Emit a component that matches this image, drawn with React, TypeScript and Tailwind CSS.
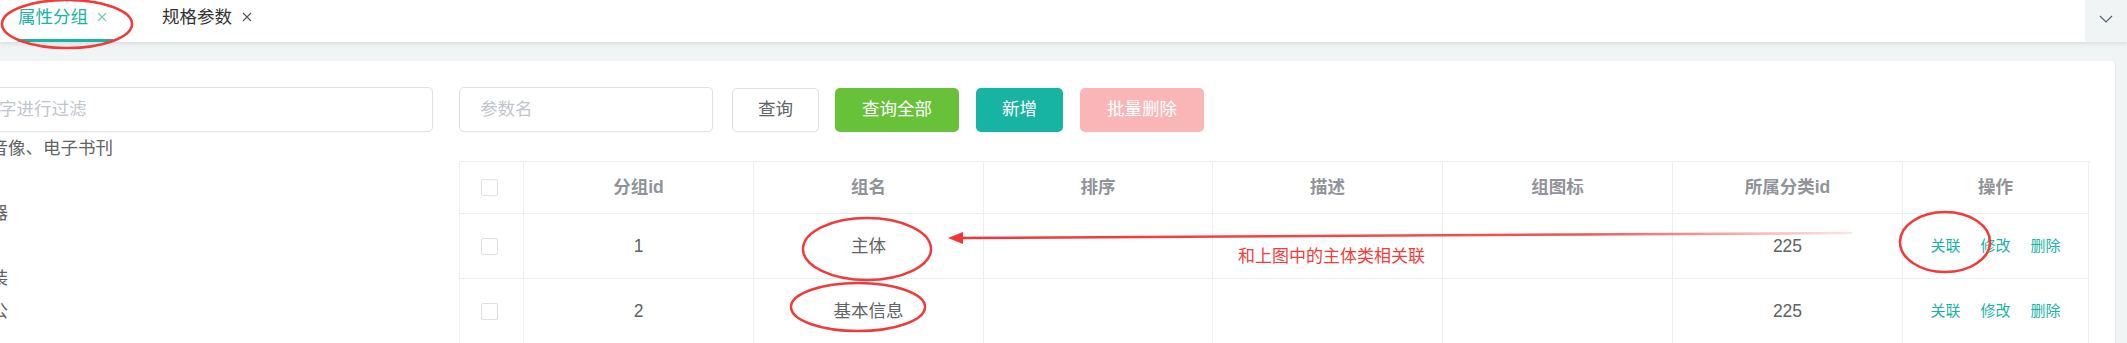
const cols = "grid grid-cols-[64px_230px_230px_229px_230px_230px_230px_186px]";
const cell = "border-r border-b border-[#ebeef5] flex items-center justify-center";

const headers = ["分组id", "组名", "排序", "描述", "组图标", "所属分类id", "操作"];
const rows = [
  { id: "1", name: "主体", sort: "", desc: "", icon: "", catId: "225" },
  { id: "2", name: "基本信息", sort: "", desc: "", icon: "", catId: "225" },
];
const tree = ["图书、音像、电子书刊", "手机", "家用电器", "数码", "家居家装", "电脑办公"];

const Close = ({ color }: { color: string }) => (
  <svg width="10" height="10" viewBox="0 0 10 10">
    <path d="M1 1L9 9M9 1L1 9" stroke={color} strokeWidth="1.1" />
  </svg>
);

const Checkbox = () => (
  <span className="block w-[17px] h-[17px] rounded-[2px] border border-[#dcdfe6] bg-white" />
);

const Annotations = () => (
  <svg className="absolute left-0 top-0 z-20 pointer-events-none" width="2127" height="343">
    <defs>
      <linearGradient id="fade" gradientUnits="userSpaceOnUse" x1="958" y1="0" x2="1852" y2="0">
        <stop offset="0" stopColor="#f23535" stopOpacity="1" />
        <stop offset="0.7" stopColor="#f23535" stopOpacity="0.85" />
        <stop offset="1" stopColor="#f23535" stopOpacity="0.12" />
      </linearGradient>
    </defs>
    <g fill="none" stroke="#f23a3a" strokeWidth="2.5">
      <ellipse cx="67" cy="24" rx="65" ry="24" />
      <ellipse cx="867" cy="249" rx="64" ry="31" />
      <ellipse cx="858" cy="307" rx="67" ry="24" />
      <ellipse cx="1945" cy="242" rx="45" ry="30" />
    </g>
    <path d="M958 238L1852 233" stroke="url(#fade)" strokeWidth="2.5" />
    <polygon points="948,238 963,232 963,244" fill="#f23535" />
  </svg>
);

export default function App() {
  return (
    <div className="relative w-[2127px] h-[343px] overflow-hidden bg-[#f1f4f5] font-['Liberation_Sans','Noto_Sans_CJK_SC',sans-serif] text-[17.5px]">
      {/* tabs bar */}
      <div className="relative z-10 h-[42px] bg-white flex shadow-[0_2px_4px_rgba(0,0,0,0.09)]">
        <div className="flex-1 flex pl-[18px] gap-[49px]">
          <div className="flex flex-col w-[95px]">
            <div className="h-[34px] flex items-center gap-[9px] text-[#17b3a3]">
              <span>属性分组</span>
              <Close color="#6fc9c0" />
            </div>
            <div className="mt-[5px] h-[3px] bg-[#17b3a3]" />
          </div>
          <div className="flex flex-col">
            <div className="h-[34px] flex items-center gap-[10px] text-[#303133]">
              <span>规格参数</span>
              <Close color="#555" />
            </div>
          </div>
        </div>
        <div className="w-[42px] bg-[#f1f4f5] flex items-center justify-center pb-[5px]">
          <svg width="14" height="8" viewBox="0 0 14 8">
            <path d="M1 1L7 7L13 1" fill="none" stroke="#5a6270" strokeWidth="1.2" />
          </svg>
        </div>
      </div>

      {/* content */}
      <div className="pt-[19px] pr-[11px]">
        <div className="bg-white rounded-tr-[4px] border-r border-[#e6e9eb] h-[300px] pt-[26px] pr-[25px] flex gap-[26px]">
          {/* category tree */}
          <div className="w-[433px] shrink-0 overflow-hidden text-[#606266]">
            <div className="ml-[-91px] h-[45px] border border-[#dcdfe6] rounded-[5px] pl-[19px] flex items-center text-[#c0c4cc] whitespace-nowrap">
              输入关键字进行过滤
            </div>
            {tree.map((t) => (
              <div key={t} className="h-[32.5px] flex items-center ml-[-62px] whitespace-nowrap">
                {t}
              </div>
            ))}
          </div>

          {/* params */}
          <div className="flex-1 min-w-0">
            <div className="flex items-center h-[45px]">
              <div className="w-[254px] h-[45px] border border-[#dcdfe6] rounded-[5px] pl-[20px] flex items-center text-[#c0c4cc]">
                参数名
              </div>
              <button className="ml-[19px] w-[87px] h-[44px] border border-[#dcdfe6] rounded-[5px] text-[#606266] bg-white">
                查询
              </button>
              <button className="ml-[16px] w-[124px] h-[44px] rounded-[5px] text-white bg-[#67c23a]">
                查询全部
              </button>
              <button className="ml-[17px] w-[87px] h-[44px] rounded-[5px] text-white bg-[#17b3a3]">
                新增
              </button>
              <button className="ml-[17px] w-[124px] h-[44px] rounded-[5px] text-white bg-[#fab6b6]">
                批量删除
              </button>
            </div>

            <div className="mt-[29px] border-t border-l border-[#ebeef5]">
              <div className={cols}>
                <div className="h-[52px] border-r border-b border-[#ebeef5] flex items-center pl-[21px]">
                  <Checkbox />
                </div>
                {headers.map((h) => (
                  <div key={h} className={`h-[52px] ${cell} font-bold text-[#909399]`}>
                    {h}
                  </div>
                ))}
              </div>
              {rows.map((r) => (
                <div key={r.id} className={`${cols} text-[#606266]`}>
                  <div className="h-[65px] border-r border-b border-[#ebeef5] flex items-center pl-[21px]">
                    <Checkbox />
                  </div>
                  <div className={`h-[65px] ${cell}`}>{r.id}</div>
                  <div className={`h-[65px] ${cell}`}>{r.name}</div>
                  <div className={`h-[65px] ${cell}`}>{r.sort}</div>
                  <div className={`h-[65px] ${cell}`}>{r.desc}</div>
                  <div className={`h-[65px] ${cell}`}>{r.icon}</div>
                  <div className={`h-[65px] ${cell}`}>{r.catId}</div>
                  <div className={`h-[65px] ${cell} gap-[20px] text-[15px] text-[#17b3a3]`}>
                    <span>关联</span>
                    <span>修改</span>
                    <span>删除</span>
                  </div>
                </div>
              ))}
            </div>
          </div>
        </div>
      </div>

      <div className="absolute left-[1238px] top-[246px] text-[17px] leading-[22px] text-[#f53b3b] whitespace-nowrap">
        和上图中的主体类相关联
      </div>
      <Annotations />
    </div>
  );
}
